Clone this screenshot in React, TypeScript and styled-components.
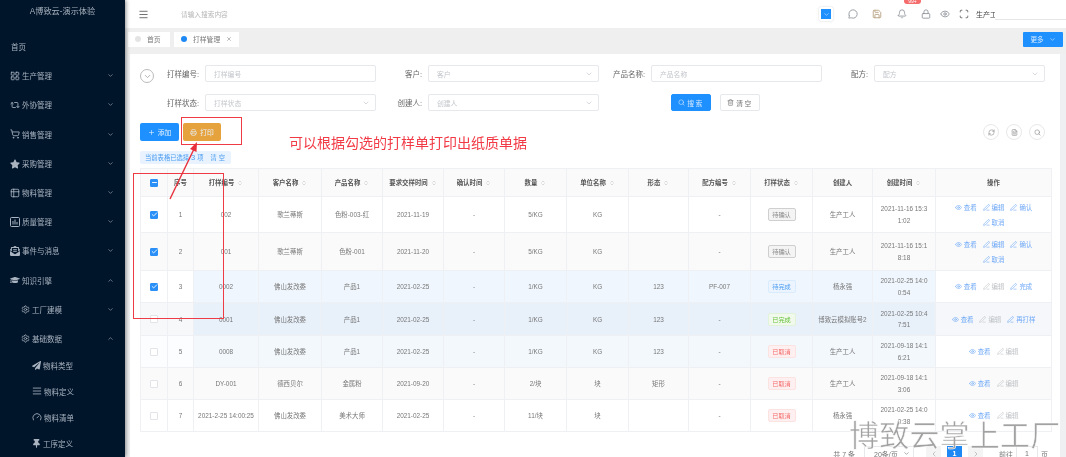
import React from 'react'
import styled, { createGlobalStyle } from 'styled-components'
import {
  Menu, MessageCircle, Save, Bell, Lock, Eye, Scan, ChevronDown, ChevronUp, ChevronLeft, ChevronRight,
  ChevronsUpDown, Search, Trash2, Plus, Printer, Check, Minus, PenLine, RefreshCw, FileText, X,
  LayoutGrid, Repeat2, ShoppingCart, Table2, Settings, AlignJustify, Gauge,
} from 'lucide-react'
import { FaStar, FaGraduationCap, FaPaperPlane, FaThumbtack, FaEnvelopeOpenText } from 'react-icons/fa'

const GlobalStyle = createGlobalStyle`
  html, body { margin: 0; padding: 0; background: #fff; }
  body { font-family: "Liberation Sans", "Noto Sans CJK SC", sans-serif; }
  * { box-sizing: border-box; }
`
const Page = styled.div`
  position: relative;
  width: 1066px;
  height: 457px;
  display: flex;
  overflow: hidden;
  background: #eef0f2;
  filter: blur(0.45px);
`
const Sidebar = styled.aside`
  width: 125px;
  flex: none;
  background: #00142a;
  color: #a9b4c0;
  box-shadow: 1px 0 4px rgba(0, 0, 0, 0.45);
  z-index: 2;
`
const Brand = styled.div`
  height: 23px;
  line-height: 23px;
  text-align: center;
  font-size: 8.2px;
  margin-bottom: 9px;
  color: #a8b2bd;
`
const NavItem = styled.div<{ $depth: number; $h: number }>`
  height: ${(p) => p.$h}px;
  display: flex;
  align-items: center;
  gap: 2px;
  font-size: 7.5px;
  padding-left: ${(p) => [11, 10, 21, 32][p.$depth]}px;
  padding-right: 11px;
  span { flex: 1; }
`
const Main = styled.div`
  flex: 1;
  min-width: 0;
  display: flex;
  flex-direction: column;
`
const Header = styled.header`
  height: 28px;
  flex: none;
  background: #fff;
  display: flex;
  align-items: center;
  padding-left: 13px;
  color: #666;
`
const SearchHint = styled.div`
  margin-left: 32px;
  flex: 1;
  font-size: 6.7px;
  color: #b5b5b5;
`
const HeaderIcons = styled.div`
  display: flex;
  align-items: center;
  color: #8a8f96;
`
const ThemeBox = styled.div`
  width: 14px;
  height: 14px;
  padding: 2px;
  border-radius: 2px;
  box-shadow: 0 0 2px rgba(0, 0, 0, 0.2);
  margin-right: 8px;
  div {
    width: 10px;
    height: 10px;
    background: #1e90ff;
    color: #cfe6ff;
    display: flex;
    align-items: center;
    justify-content: center;
  }
`
const IconSlot = styled.div<{ $w: number }>`
  position: relative;
  width: ${(p) => p.$w}px;
  display: flex;
  justify-content: center;
`
const Badge = styled.div`
  position: absolute;
  left: 15px;
  top: -11px;
  width: 17px;
  height: 6px;
  border-radius: 3px;
  background: #f56c6c;
  color: #fff;
  font-size: 5px;
  line-height: 6px;
  text-align: center;
`
const UserName = styled.div`
  width: 19px;
  overflow: hidden;
  white-space: nowrap;
  font-size: 7px;
  color: #444;
`
const UserInput = styled.div`
  width: 71px;
  height: 17px;
  margin-bottom: 5px;
  border-bottom: 1px solid #e6e6e6;
  background: #fff;
`
const TabBar = styled.div`
  height: 26px;
  flex: none;
  display: flex;
  align-items: center;
  padding: 0 3px 4px 3px;
  gap: 4px;
  background: #efefef;
`
const Tab = styled.div<{ $w: number; $active?: boolean }>`
  width: ${(p) => p.$w}px;
  height: 15px;
  display: flex;
  align-items: center;
  gap: 6px;
  padding-left: 7px;
  background: #fff;
  font-size: 6.8px;
  color: #777;
  i {
    width: 6px;
    height: 6px;
    border-radius: 50%;
    background: ${(p) => (p.$active ? '#1e88f5' : '#e4e4e4')};
  }
`
const MoreButton = styled.div`
  margin-left: auto;
  width: 40px;
  height: 15px;
  border-radius: 1px;
  background: #1e90ff;
  color: #d9ecff;
  font-size: 6.6px;
  display: flex;
  align-items: center;
  justify-content: center;
  gap: 5px;
`
const Content = styled.div`
  flex: 1;
  min-height: 0;
  margin: 0 6px 0 5px;
`
const Card = styled.section`
  height: 403px;
  background: #fff;
  padding: 11px 9px 0 10px;
`
const FilterRow = styled.div`
  display: flex;
  align-items: flex-start;
`
const Toggle = styled.div`
  width: 14px;
  height: 14px;
  margin: 4px 1px 0 0;
  border: 1px solid #bbb;
  border-radius: 50%;
  color: #999;
  display: flex;
  align-items: center;
  justify-content: center;
`
const FilterGrid = styled.div`
  display: grid;
  grid-template-columns: repeat(4, 223px);
  row-gap: 12px;
`
const Field = styled.label`
  display: flex;
  align-items: center;
  height: 17px;
`
const FieldLabel = styled.span`
  width: 44px;
  margin-right: 6px;
  text-align: right;
  white-space: nowrap;
  font-size: 7.5px;
  color: #666;
`
const Control = styled.div`
  width: 171px;
  height: 17px;
  display: flex;
  align-items: center;
  justify-content: space-between;
  padding: 0 5px 0 8px;
  border: 1px solid #e6e8eb;
  border-radius: 2px;
  font-size: 6.8px;
  color: #c3c6cb;
`
const FilterActions = styled.div`
  display: flex;
  gap: 9px;
  padding-left: 70px;
`
const SearchButton = styled.div<{ $primary?: boolean }>`
  width: 40px;
  height: 17px;
  border-radius: 2px;
  display: flex;
  align-items: center;
  justify-content: center;
  gap: 2px;
  font-size: 6.8px;
  letter-spacing: 1.5px;
  background: ${(p) => (p.$primary ? '#1e90ff' : '#fff')};
  color: ${(p) => (p.$primary ? '#d5e9ff' : '#777')};
  border: 1px solid ${(p) => (p.$primary ? '#1e90ff' : '#e6e8eb')};
`
const ActionRow = styled.div`
  display: flex;
  align-items: center;
  gap: 4px;
  margin-top: 12px;
  height: 18px;
`
const ActionButton = styled.div<{ $color: string }>`
  width: 38px;
  height: 18px;
  border-radius: 2px;
  background: ${(p) => p.$color};
  color: #e9f3ff;
  font-size: 6.8px;
  display: flex;
  align-items: center;
  justify-content: center;
  gap: 3px;
  &:first-child { width: 39px; }
`
const CircleGroup = styled.div`
  margin-left: auto;
  margin-right: 6px;
  display: flex;
  gap: 7px;
`
const CircleButton = styled.div`
  width: 16px;
  height: 16px;
  border: 1px solid #e8e8e8;
  border-radius: 50%;
  color: #888;
  display: flex;
  align-items: center;
  justify-content: center;
`
const SelectedBar = styled.div`
  width: 91px;
  height: 13px;
  margin-top: 10px;
  padding-left: 5px;
  background: #e8f3ff;
  border-radius: 2px;
  display: flex;
  align-items: center;
  font-size: 6.3px;
  color: #4a9cf0;
  white-space: nowrap;
  b { margin: 0 2px; font-size: 7.5px; font-weight: 400; }
  em { margin-left: 7px; font-style: normal; letter-spacing: 2px; font-size: 6.3px; }
`
const Table = styled.table`
  width: 911px;
  margin-top: 4px;
  table-layout: fixed;
  border-collapse: collapse;
  font-size: 6.4px;
  color: #777;
  th, td {
    padding: 0;
    text-align: center;
    border: 1px solid #eef0f4;
  }
`
const HeadCell = styled.th`
  height: 28px;
  background: #fafafa;
  color: #555;
  font-weight: 700;
  white-space: nowrap;
  svg { margin-left: 3px; vertical-align: -1px; color: #bbb; }
`
const Cell = styled.td<{ $bg: string }>`
  background: ${(p) => p.$bg};
`
const TimeCell = styled(Cell)`
  padding: 0 7px !important;
  line-height: 11.5px;
  word-break: break-all;
`
const Box = styled.div<{ $on?: boolean }>`
  width: 8px;
  height: 8px;
  margin: 0 auto;
  border-radius: 1px;
  background: ${(p) => (p.$on ? '#2a90f7' : '#fff')};
  border: 1px solid ${(p) => (p.$on ? '#2a90f7' : '#e2e4e8')};
  color: #fff;
  display: flex;
  align-items: center;
  justify-content: center;
  svg { margin: 0; color: #fff; flex: none; }
`
const Tag = styled.span<{ $kind: string }>`
  display: inline-block;
  width: 28px;
  height: 13px;
  line-height: 11px;
  border-radius: 2px;
  font-size: 6.2px;
  ${(p) =>
    ({
      wait: 'color:#888;background:#f4f4f5;border:1px solid #cfcfcf;',
      doing: 'color:#4a9cf0;background:#ecf5ff;border:1px solid #d9ecff;',
      done: 'color:#67c23a;background:#f0f9eb;border:1px solid #e1f3d8;',
      cancel: 'color:#f56c6c;background:#fef0f0;border:1px solid #fde2e2;',
    })[p.$kind]}
`
const OpsWrap = styled.div`
  display: flex;
  flex-wrap: wrap;
  justify-content: center;
  gap: 4px 6px;
  padding: 0 13px;
`
const OpLink = styled.span<{ $off?: boolean }>`
  display: inline-flex;
  align-items: center;
  gap: 2px;
  height: 11px;
  white-space: nowrap;
  font-size: 6.4px;
  color: ${(p) => (p.$off ? '#bfc2c6' : '#6ea8f7')};
`
const Pager = styled.div`
  display: flex;
  align-items: center;
  justify-content: flex-end;
  height: 15px;
  margin-top: 14px;
  padding-right: 3px;
  font-size: 7px;
  color: #777;
  white-space: nowrap;
`
const PagerSelect = styled.div`
  width: 50px;
  height: 15px;
  margin: 0 12px 0 9px;
  padding: 0 3px 0 9px;
  border: 1px solid #e6e8eb;
  display: flex;
  align-items: center;
  justify-content: space-between;
`
const PageBtn = styled.div<{ $on?: boolean }>`
  width: 15px;
  height: 15px;
  margin-right: 6px;
  background: ${(p) => (p.$on ? '#1e88f5' : '#f4f4f5')};
  color: ${(p) => (p.$on ? '#fff' : '#aaa')};
  font-weight: ${(p) => (p.$on ? 700 : 400)};
  display: flex;
  align-items: center;
  justify-content: center;
`
const GotoLabel = styled.span`
  margin-left: 10px;
`
const PagerInput = styled.div`
  width: 22px;
  height: 15px;
  margin: 0 3px;
  border: 1px solid #e6e8eb;
  text-align: center;
  line-height: 14px;
`
const RedFrame = styled.div<{ $x: number; $y: number; $w: number; $h: number }>`
  position: absolute;
  left: ${(p) => p.$x}px;
  top: ${(p) => p.$y}px;
  width: ${(p) => p.$w}px;
  height: ${(p) => p.$h}px;
  border: 1px solid #ee3b46;
  z-index: 3;
`
const Arrow = styled.svg`
  position: absolute;
  left: 160px;
  top: 135px;
  z-index: 3;
`
const Caption = styled.div`
  position: absolute;
  left: 289px;
  top: 133px;
  font-size: 14px;
  line-height: 20px;
  color: #f23a46;
  white-space: nowrap;
  z-index: 3;
`
const Watermark = styled.div`
  position: absolute;
  left: 849px;
  top: 418px;
  font-size: 30px;
  line-height: 36px;
  letter-spacing: 0.2px;
  color: #a2a2a2;
  -webkit-text-stroke: 0.55px #fff;
  white-space: nowrap;
  z-index: 4;
`

const sideItems: { label: string; depth: number; h: number; icon?: React.ReactNode; arrow?: 'up' | 'down' }[] = [
  { label: '首页', depth: 0, h: 29 },
  { label: '生产管理', depth: 1, h: 29, icon: <LayoutGrid size={10} />, arrow: 'down' },
  { label: '外协管理', depth: 1, h: 29, icon: <Repeat2 size={10} />, arrow: 'down' },
  { label: '销售管理', depth: 1, h: 30, icon: <ShoppingCart size={10} />, arrow: 'down' },
  { label: '采购管理', depth: 1, h: 29, icon: <FaStar size={10} />, arrow: 'down' },
  { label: '物料管理', depth: 1, h: 29, icon: <Table2 size={10} />, arrow: 'down' },
  {
    label: '质量管理',
    depth: 1,
    h: 29,
    icon: (
      <svg width="10" height="10" viewBox="0 0 10 10" fill="none" stroke="currentColor">
        <rect x="0.5" y="0.5" width="9" height="9" rx="1" />
        <path d="M3 7.5V4M5 7.5V2.5M7 7.5V5" />
      </svg>
    ),
    arrow: 'down',
  },
  { label: '事件与消息', depth: 1, h: 29, icon: <FaEnvelopeOpenText size={10} />, arrow: 'down' },
  { label: '知识引擎', depth: 1, h: 30, icon: <FaGraduationCap size={10} />, arrow: 'up' },
  { label: '工厂建模', depth: 2, h: 29, icon: <Settings size={9} />, arrow: 'down' },
  { label: '基础数据', depth: 2, h: 28, icon: <Settings size={9} />, arrow: 'up' },
  { label: '物料类型', depth: 3, h: 26, icon: <FaPaperPlane size={9} /> },
  { label: '物料定义', depth: 3, h: 26, icon: <AlignJustify size={10} /> },
  { label: '物料清单', depth: 3, h: 26, icon: <Gauge size={10} /> },
  { label: '工序定义', depth: 3, h: 26, icon: <FaThumbtack size={9} /> },
]

const columns: { title: string; width: number; sort?: boolean }[] = [
  { title: '', width: 27 },
  { title: '序号', width: 26 },
  { title: '打样编号', width: 65, sort: true },
  { title: '客户名称', width: 63, sort: true },
  { title: '产品名称', width: 61, sort: true },
  { title: '要求交样时间', width: 61, sort: true },
  { title: '确认时间', width: 61, sort: true },
  { title: '数量', width: 62, sort: true },
  { title: '单位名称', width: 62, sort: true },
  { title: '形态', width: 60, sort: true },
  { title: '配方编号', width: 62, sort: true },
  { title: '打样状态', width: 62, sort: true },
  { title: '创建人', width: 60 },
  { title: '创建时间', width: 63, sort: true },
  { title: '操作', width: 116 },
]

type Row = {
  h: number
  on: boolean
  code: string
  customer: string
  product: string
  due: string
  qty: string
  unit: string
  form: string
  recipe: string
  status: [string, string]
  creator: string
  created: string
  ops: [string, boolean?][]
  bg: [string, string, string]
}

const rows: Row[] = [
  {
    h: 36, on: true, code: '002', customer: '歌兰蒂斯', product: '色粉-003-红', due: '2021-11-19', qty: '5/KG', unit: 'KG', form: '', recipe: '-',
    status: ['待确认', 'wait'], creator: '生产工人', created: '2021-11-16 15:31:02',
    ops: [['查看'], ['编辑'], ['确认'], ['取消']], bg: ['#fff', '#fff', '#fff'],
  },
  {
    h: 38, on: true, code: '001', customer: '歌兰蒂斯', product: '色粉-001', due: '2021-11-20', qty: '5/KG', unit: 'KG', form: '', recipe: '-',
    status: ['待确认', 'wait'], creator: '生产工人', created: '2021-11-16 15:18:18',
    ops: [['查看'], ['编辑'], ['确认'], ['取消']], bg: ['#fafafa', '#fafafa', '#fafafa'],
  },
  {
    h: 32, on: true, code: '0002', customer: '佛山发改委', product: '产品1', due: '2021-02-25', qty: '1/KG', unit: 'KG', form: '123', recipe: 'PF-007',
    status: ['待完成', 'doing'], creator: '杨永强', created: '2021-02-25 14:00:54',
    ops: [['查看'], ['编辑', true], ['完成']], bg: ['#fff', '#f0f6fd', '#fff'],
  },
  {
    h: 33, on: false, code: '0001', customer: '佛山发改委', product: '产品1', due: '2021-02-25', qty: '1/KG', unit: 'KG', form: '123', recipe: '-',
    status: ['已完成', 'done'], creator: '博致云模拟账号2', created: '2021-02-25 10:47:51',
    ops: [['查看'], ['编辑', true], ['再打样']], bg: ['#f7f8f9', '#e8f0fa', '#f5f7fa'],
  },
  {
    h: 32, on: false, code: '0008', customer: '佛山发改委', product: '产品1', due: '2021-02-25', qty: '1/KG', unit: 'KG', form: '123', recipe: '-',
    status: ['已取消', 'cancel'], creator: '生产工人', created: '2021-09-18 14:16:21',
    ops: [['查看'], ['编辑', true]], bg: ['#fcfdfe', '#f3f8fd', '#fff'],
  },
  {
    h: 32, on: false, code: 'DY-001', customer: '德西贝尔', product: '金属粉', due: '2021-09-20', qty: '2/块', unit: '块', form: '矩形', recipe: '-',
    status: ['已取消', 'cancel'], creator: '生产工人', created: '2021-09-18 14:13:06',
    ops: [['查看'], ['编辑', true]], bg: ['#fafafa', '#fafafa', '#fafafa'],
  },
  {
    h: 32, on: false, code: '2021-2-25 14:00:25', customer: '佛山发改委', product: '美术大师', due: '2021-02-25', qty: '11/块', unit: '块', form: '', recipe: '-',
    status: ['已取消', 'cancel'], creator: '杨永强', created: '2021-02-25 14:00:38',
    ops: [['查看'], ['编辑', true]], bg: ['#fff', '#fff', '#fff'],
  },
]

const filters: { label: string; hint: string; select?: boolean }[] = [
  { label: '打样编号:', hint: '打样编号' },
  { label: '客户:', hint: '客户', select: true },
  { label: '产品名称:', hint: '产品名称' },
  { label: '配方:', hint: '配方', select: true },
  { label: '打样状态:', hint: '打样状态', select: true },
  { label: '创建人:', hint: '创建人', select: true },
]

export default function App() {
  return (
    <>
      <GlobalStyle />
      <Page>
        <Sidebar>
          <Brand>A博致云-演示体验</Brand>
          {sideItems.map((item) => (
            <NavItem key={item.label} $depth={item.depth} $h={item.h}>
              {item.icon}
              <span>{item.label}</span>
              {item.arrow === 'down' && <ChevronDown size={7} />}
              {item.arrow === 'up' && <ChevronUp size={7} />}
            </NavItem>
          ))}
        </Sidebar>
        <Main>
          <Header>
            <Menu size={11} />
            <SearchHint>请输入搜索内容</SearchHint>
            <HeaderIcons>
              <ThemeBox>
                <div>
                  <ChevronDown size={7} />
                </div>
              </ThemeBox>
              <IconSlot $w={24}><MessageCircle size={10} /></IconSlot>
              <IconSlot $w={24}><Save size={10} color="#b39b7a" /></IconSlot>
              <IconSlot $w={25}><Bell size={10} /><Badge>99+</Badge></IconSlot>
              <IconSlot $w={24}><Lock size={10} /></IconSlot>
              <IconSlot $w={14}><Eye size={10} /></IconSlot>
              <IconSlot $w={24}><Scan size={10} color="#555" /></IconSlot>
              <UserName>生产工人</UserName>
              <UserInput />
            </HeaderIcons>
          </Header>
          <TabBar>
            <Tab $w={42}><i />首页</Tab>
            <Tab $w={65} $active><i />打样管理<X size={6} /></Tab>
            <MoreButton>更多<ChevronDown size={7} /></MoreButton>
          </TabBar>
          <Content>
            <Card>
              <FilterRow>
                <Toggle><ChevronDown size={9} /></Toggle>
                <FilterGrid>
                  {filters.map((f) => (
                    <Field key={f.label}>
                      <FieldLabel>{f.label}</FieldLabel>
                      <Control>
                        {f.hint}
                        {f.select && <ChevronDown size={8} />}
                      </Control>
                    </Field>
                  ))}
                  <FilterActions>
                    <SearchButton $primary><Search size={7} />搜索</SearchButton>
                    <SearchButton><Trash2 size={7} />清空</SearchButton>
                  </FilterActions>
                </FilterGrid>
              </FilterRow>
              <ActionRow>
                <ActionButton $color="#1e90ff"><Plus size={7} />添加</ActionButton>
                <ActionButton $color="#e6a23c"><Printer size={7} />打印</ActionButton>
                <CircleGroup>
                  <CircleButton><RefreshCw size={7} /></CircleButton>
                  <CircleButton><FileText size={7} /></CircleButton>
                  <CircleButton><Search size={7} /></CircleButton>
                </CircleGroup>
              </ActionRow>
              <SelectedBar>当前表格已选择<b>3</b>项<em>清空</em></SelectedBar>
              <Table>
                <colgroup>
                  {columns.map((c, i) => (
                    <col key={i} width={c.width} />
                  ))}
                </colgroup>
                <thead>
                  <tr>
                    {columns.map((c, i) => (
                      <HeadCell key={i}>
                        {i === 0 ? (
                          <Box $on><Minus size={7} strokeWidth={3} /></Box>
                        ) : (
                          c.title
                        )}
                        {c.sort && <ChevronsUpDown size={6} />}
                      </HeadCell>
                    ))}
                  </tr>
                </thead>
                <tbody>
                  {rows.map((r, i) => (
                    <tr key={r.code} style={{ height: r.h }}>
                      <Cell $bg={r.bg[0]}>
                        <Box $on={r.on}>{r.on && <Check size={7} strokeWidth={3} />}</Box>
                      </Cell>
                      <Cell $bg={r.bg[0]}>{i + 1}</Cell>
                      <Cell $bg={r.bg[1]}>{r.code}</Cell>
                      <Cell $bg={r.bg[1]}>{r.customer}</Cell>
                      <Cell $bg={r.bg[1]}>{r.product}</Cell>
                      <Cell $bg={r.bg[1]}>{r.due}</Cell>
                      <Cell $bg={r.bg[1]}>-</Cell>
                      <Cell $bg={r.bg[1]}>{r.qty}</Cell>
                      <Cell $bg={r.bg[1]}>{r.unit}</Cell>
                      <Cell $bg={r.bg[1]}>{r.form}</Cell>
                      <Cell $bg={r.bg[1]}>{r.recipe}</Cell>
                      <Cell $bg={r.bg[1]}><Tag $kind={r.status[1]}>{r.status[0]}</Tag></Cell>
                      <Cell $bg={r.bg[1]}>{r.creator}</Cell>
                      <TimeCell $bg={r.bg[1]}>{r.created}</TimeCell>
                      <Cell $bg={r.bg[2]}>
                        <OpsWrap>
                          {r.ops.map(([label, off]) => (
                            <OpLink key={label} $off={off}>
                              {label === '查看' ? <Eye size={7} /> : <PenLine size={7} />}
                              {label}
                            </OpLink>
                          ))}
                        </OpsWrap>
                      </Cell>
                    </tr>
                  ))}
                </tbody>
              </Table>
              <Pager>
                共 7 条
                <PagerSelect>20条/页<ChevronDown size={7} /></PagerSelect>
                <PageBtn><ChevronLeft size={8} /></PageBtn>
                <PageBtn $on>1</PageBtn>
                <PageBtn><ChevronRight size={8} /></PageBtn>
                <GotoLabel>前往</GotoLabel>
                <PagerInput>1</PagerInput>
                页
              </Pager>
            </Card>
          </Content>
        </Main>
        <RedFrame $x={181} $y={117} $w={61} $h={28} />
        <RedFrame $x={133} $y={173} $w={91} $h={146} />
        <Arrow width="50" height="70" viewBox="0 0 50 70">
          <path d="M10 64 L34 14" stroke="#e8303c" strokeWidth="1.4" fill="none" />
          <path d="M37 7 L36.5 17 L30 14 Z" fill="#e8303c" />
        </Arrow>
        <Caption>可以根据勾选的打样单打印出纸质单据</Caption>
        <Watermark>博致云掌上工厂</Watermark>
      </Page>
    </>
  )
}
